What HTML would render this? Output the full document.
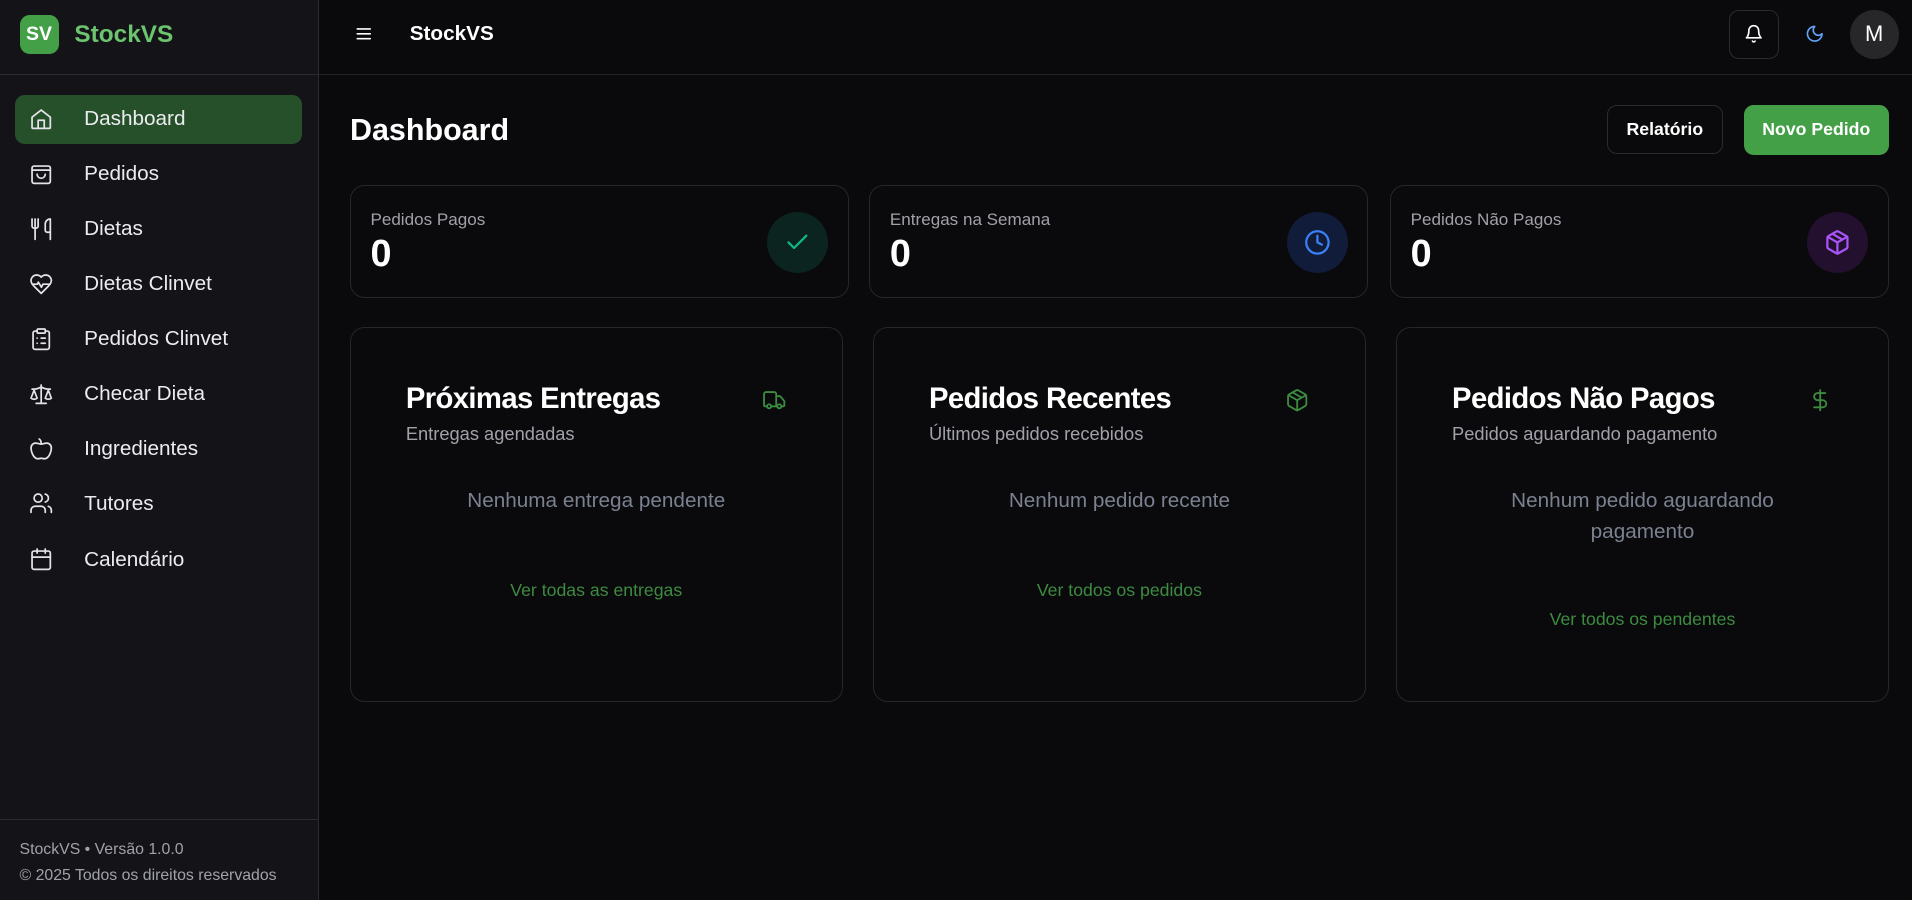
<!DOCTYPE html>
<html><head><meta charset="utf-8"><style>
html,body{margin:0;padding:0;background:#0a0a0c;overflow:hidden;width:1912px;height:900px}
#w{zoom:1.21939;width:1568px;height:738px;position:relative;font-family:"Liberation Sans",sans-serif;color:#fff}
.abs{position:absolute}
.side{left:0;top:0;width:261px;height:738px;background:#141418;border-right:1px solid #2a2a2f}
.nav{position:absolute;left:12px;width:236px;height:40px;border-radius:8px;display:flex;align-items:center}
.nav svg{position:absolute;left:12px;width:20px;height:20px;fill:none;stroke:#e4e4e7;stroke-width:1.7;stroke-linecap:round;stroke-linejoin:round}
.nav span{position:absolute;left:57px;font-size:17px;color:#ececef}
.card{position:absolute;border:1px solid #26262b;border-radius:12px;background:#0a0a0c;box-sizing:border-box}
.lab{position:absolute;left:16px;top:19px;font-size:14px;color:#a1a1aa}
.val{position:absolute;left:16px;top:38px;font-size:31px;font-weight:bold}
.circ{position:absolute;right:16px;top:21px;width:50px;height:50px;border-radius:50%;display:flex;align-items:center;justify-content:center}
.circ svg{width:22px;height:22px;fill:none;stroke-width:2;stroke-linecap:round;stroke-linejoin:round}
.big .t{position:absolute;left:45px;top:45px;font-size:24px;font-weight:bold;letter-spacing:-0.5px}
.big .s{position:absolute;left:45px;top:78px;font-size:15px;color:#a1a1aa}
.big .ic{position:absolute;left:337px;top:49px;width:20px;height:20px;fill:none;stroke:#3d8b40;stroke-width:1.8;stroke-linecap:round;stroke-linejoin:round}
.big .e{position:absolute;left:0;right:0;text-align:center;font-size:17px;color:#7b8191;line-height:25px}
.big .l{position:absolute;left:0;right:0;text-align:center;font-size:14.5px;color:#3d8b40}
</style></head><body><div id="w">
<div class="abs side">
 <div class="abs" style="left:16px;top:12px;width:32px;height:32px;background:#43a047;border-radius:8px;font-weight:bold;font-size:16px;display:flex;align-items:center;justify-content:center">SV</div>
 <div class="abs" style="left:61px;top:17px;font-size:20px;font-weight:bold;color:#6cc46f">StockVS</div>
 <div class="abs" style="left:0;top:61px;width:261px;border-top:1px solid #2a2a2f"></div>
 <div class="nav" style="top:78px;background:#26502a"><svg viewBox="0 0 24 24"><path d="M3 10l9-7 9 7v10a1 1 0 0 1-1 1H4a1 1 0 0 1-1-1z"/><path d="M9 21v-8h6v8"/></svg><span>Dashboard</span></div>
 <div class="nav" style="top:123px"><svg viewBox="0 0 24 24"><rect x="3" y="4" width="18" height="17" rx="2"/><path d="M3 8h18M8 12a4 4 0 0 0 8 0"/></svg><span>Pedidos</span></div>
 <div class="nav" style="top:168px"><svg viewBox="0 0 24 24"><path d="M3 2v7c0 1.1.9 2 2 2h2a2 2 0 0 0 2-2V2M6 2v20M21 15V2a5 5 0 0 0-5 5v6c0 1.1.9 2 2 2h3v7"/></svg><span>Dietas</span></div>
 <div class="nav" style="top:213px"><svg viewBox="0 0 24 24"><path d="M19 14c1.5-1.5 3-3.2 3-5.5A5.5 5.5 0 0 0 16.5 3c-1.8 0-3 .5-4.5 2-1.5-1.5-2.7-2-4.5-2A5.5 5.5 0 0 0 2 8.5c0 2.3 1.5 4 3 5.5l7 7z"/><path d="M3.2 12h5l1-2 3 5 1.5-3h7"/></svg><span>Dietas Clinvet</span></div>
 <div class="nav" style="top:258px"><svg viewBox="0 0 24 24"><rect x="8" y="2" width="8" height="4" rx="1"/><path d="M16 4h2a2 2 0 0 1 2 2v14a2 2 0 0 1-2 2H6a2 2 0 0 1-2-2V6a2 2 0 0 1 2-2h2M12 11h4M12 16h4M8 11h.01M8 16h.01"/></svg><span>Pedidos Clinvet</span></div>
 <div class="nav" style="top:303px"><svg viewBox="0 0 24 24"><path d="M16 16l3-8 3 8c-.9.7-1.9 1-3 1s-2.1-.3-3-1zM2 16l3-8 3 8c-.9.7-1.9 1-3 1s-2.1-.3-3-1zM7 21h10M12 3v18M3 7h2c2 0 5-1 7-2 2 1 5 2 7 2h2"/></svg><span>Checar Dieta</span></div>
 <div class="nav" style="top:348px"><svg viewBox="0 0 24 24"><path d="M12 20.9c1.5 0 3 1.1 5 .1 3-1.5 5-6.5 5-10 0-3-2-5-4.5-5-2 0-3.5 1-5.5 1S8.5 6 6.5 6C4 6 2 8 2 11c0 3.5 2 8.5 5 10 2 1 3.5-.1 5-.1z"/><path d="M10 2c1 .5 2 2 2 5"/></svg><span>Ingredientes</span></div>
 <div class="nav" style="top:393px"><svg viewBox="0 0 24 24"><path d="M16 21v-2a4 4 0 0 0-4-4H6a4 4 0 0 0-4 4v2"/><circle cx="9" cy="7" r="4"/><path d="M22 21v-2a4 4 0 0 0-3-3.9M16 3.1a4 4 0 0 1 0 7.8"/></svg><span>Tutores</span></div>
 <div class="nav" style="top:439px"><svg viewBox="0 0 24 24"><rect x="3" y="4" width="18" height="18" rx="2"/><path d="M16 2v4M8 2v4M3 10h18"/></svg><span>Calendário</span></div>
 <div class="abs" style="left:0;top:672px;width:261px;border-top:1px solid #2a2a2f"></div>
 <div class="abs" style="left:16px;top:690px;font-size:13px;color:#a1a1aa">StockVS • Versão 1.0.0</div>
 <div class="abs" style="left:16px;top:711px;font-size:13px;color:#a1a1aa">© 2025 Todos os direitos reservados</div>
</div>
<div class="abs" style="left:262px;top:61px;width:1306px;border-top:1px solid #222226"></div>
<svg class="abs" style="left:290px;top:20px;width:16px;height:16px" viewBox="0 0 24 24" fill="none" stroke="#fff" stroke-width="2" stroke-linecap="round"><path d="M4 6h16M4 12h16M4 18h16"/></svg>
<div class="abs" style="left:336px;top:18px;font-size:17px;font-weight:bold">StockVS</div>
<div class="abs" style="left:1418px;top:8px;width:39px;height:39px;border:1px solid #2a2a2f;border-radius:8px"></div>
<svg class="abs" style="left:1430px;top:20px;width:16px;height:16px" viewBox="0 0 24 24" fill="none" stroke="#fff" stroke-width="2" stroke-linecap="round" stroke-linejoin="round"><path d="M6 8a6 6 0 0 1 12 0c0 7 3 9 3 9H3s3-2 3-9M10.3 21a1.9 1.9 0 0 0 3.4 0"/></svg>
<svg class="abs" style="left:1480px;top:20px;width:16px;height:16px" viewBox="0 0 24 24" fill="none" stroke="#60a5fa" stroke-width="2" stroke-linecap="round" stroke-linejoin="round"><path d="M12 3a6 6 0 0 0 9 9 9 9 0 1 1-9-9z"/></svg>
<div class="abs" style="left:1517px;top:8px;width:40px;height:40px;border-radius:50%;background:#27272a;display:flex;align-items:center;justify-content:center;font-size:18px">M</div>
<div class="abs" style="left:287px;top:93px;font-size:25px;font-weight:bold">Dashboard</div>
<div class="abs" style="left:1318px;top:86px;width:93px;height:39px;border:1px solid #2a2a2f;border-radius:8px;display:flex;align-items:center;justify-content:center;font-size:14.5px;font-weight:bold">Relatório</div>
<div class="abs" style="left:1430px;top:86px;width:119px;height:41px;background:#43a047;border-radius:8px;display:flex;align-items:center;justify-content:center;font-size:14.5px;font-weight:bold">Novo Pedido</div>

<div class="card" style="left:287px;top:152px;width:409px;height:92px"><div class="lab">Pedidos Pagos</div><div class="val">0</div><div class="circ" style="background:#0b2420"><svg viewBox="0 0 24 24" stroke="#10b981"><path d="M20 6L9 17l-5-5"/></svg></div></div>
<div class="card" style="left:713px;top:152px;width:409px;height:92px"><div class="lab">Entregas na Semana</div><div class="val">0</div><div class="circ" style="background:#111c3a"><svg viewBox="0 0 24 24" stroke="#3b82f6"><circle cx="12" cy="12" r="10"/><path d="M12 6v6l4 2"/></svg></div></div>
<div class="card" style="left:1140px;top:152px;width:409px;height:92px"><div class="lab">Pedidos Não Pagos</div><div class="val">0</div><div class="circ" style="background:#22102e"><svg viewBox="0 0 24 24" stroke="#a855f7"><path d="M21 8a2 2 0 0 0-1-1.7l-7-4a2 2 0 0 0-2 0l-7 4A2 2 0 0 0 3 8v8a2 2 0 0 0 1 1.7l7 4a2 2 0 0 0 2 0l7-4a2 2 0 0 0 1-1.7z"/><path d="M3.3 7L12 12l8.7-5M12 22V12M7.5 4.3l9 5.2"/></svg></div></div>

<div class="card big" style="left:287px;top:268px;width:404px;height:308px"><div class="t">Próximas Entregas</div><div class="s">Entregas agendadas</div><svg class="ic" viewBox="0 0 24 24"><path d="M14 18V6a2 2 0 0 0-2-2H4a2 2 0 0 0-2 2v11a1 1 0 0 0 1 1h2M15 18H9M19 18h2a1 1 0 0 0 1-1v-3.7a1 1 0 0 0-.2-.6l-3.5-4.3A1 1 0 0 0 17.5 8H14"/><circle cx="17" cy="18" r="2"/><circle cx="7" cy="18" r="2"/></svg><div class="e" style="top:130px">Nenhuma entrega pendente</div><div class="l" style="top:207px">Ver todas as entregas</div></div>
<div class="card big" style="left:716px;top:268px;width:404px;height:308px"><div class="t">Pedidos Recentes</div><div class="s">Últimos pedidos recebidos</div><svg class="ic" viewBox="0 0 24 24"><path d="M21 8a2 2 0 0 0-1-1.7l-7-4a2 2 0 0 0-2 0l-7 4A2 2 0 0 0 3 8v8a2 2 0 0 0 1 1.7l7 4a2 2 0 0 0 2 0l7-4a2 2 0 0 0 1-1.7z"/><path d="M3.3 7L12 12l8.7-5M12 22V12M7.5 4.3l9 5.2"/></svg><div class="e" style="top:130px">Nenhum pedido recente</div><div class="l" style="top:207px">Ver todos os pedidos</div></div>
<div class="card big" style="left:1145px;top:268px;width:404px;height:308px"><div class="t">Pedidos Não Pagos</div><div class="s">Pedidos aguardando pagamento</div><svg class="ic" viewBox="0 0 24 24"><path d="M12 2v20M17 5H9.5a3.5 3.5 0 0 0 0 7h5a3.5 3.5 0 0 1 0 7H6"/></svg><div class="e" style="top:130px;padding:0 60px">Nenhum pedido aguardando pagamento</div><div class="l" style="top:231px">Ver todos os pendentes</div></div>
</div></body></html>
